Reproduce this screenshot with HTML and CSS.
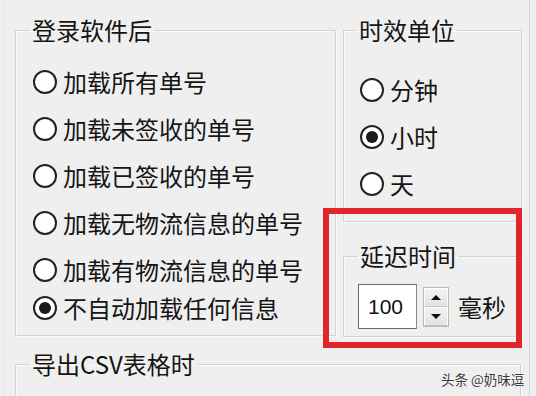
FILE: index.html
```html
<!DOCTYPE html>
<html lang="zh-CN">
<head>
    <meta charset="UTF-8">
    <title>设置</title>
    <link rel="stylesheet" href="styles.css">
</head>
<body>
    <div class="window">
        <div class="top">
            <fieldset class="group login">
                <legend>登录软件后</legend>
                <label class="radio"><span class="dot"></span>加载所有单号</label>
                <label class="radio"><span class="dot"></span>加载未签收的单号</label>
                <label class="radio"><span class="dot"></span>加载已签收的单号</label>
                <label class="radio"><span class="dot"></span>加载无物流信息的单号</label>
                <label class="radio"><span class="dot"></span>加载有物流信息的单号</label>
                <label class="radio checked tight"><span class="dot"></span>不自动加载任何信息</label>
            </fieldset>
            <div class="side">
                <fieldset class="group units">
                    <legend>时效单位</legend>
                    <label class="radio"><span class="dot"></span>分钟</label>
                    <label class="radio checked"><span class="dot"></span>小时</label>
                    <label class="radio"><span class="dot"></span>天</label>
                </fieldset>
                <fieldset class="group delay">
                    <legend>延迟时间</legend>
                    <div class="spin-row">
                        <div class="spin-input">100</div>
                        <div class="spin-btns">
                            <span class="spin-btn"><i class="arrow up"></i></span>
                            <span class="spin-btn"><i class="arrow down"></i></span>
                        </div>
                        <span class="unit">毫秒</span>
                    </div>
                </fieldset>
            </div>
        </div>
        <fieldset class="group export">
            <legend>导出CSV表格时</legend>
        </fieldset>

        <!-- annotation drawn over the dialog -->
        <div class="callout"></div>
        <div class="watermark">头条 @奶味逗</div>
    </div>
</body>
</html>
```

FILE: styles.css
```css
body {
    margin: 0;
    width: 536px;
    height: 396px;
    overflow: hidden;
    background: #efefef;
    font-family: "Noto Sans CJK SC", sans-serif;
    color: #151515;
}

.window {
    position: relative;
    box-sizing: border-box;
    width: 527px;
    height: 396px;
    margin-left: 3px;
    padding: 16px 0 0 11px;
    border-left: 1px solid #e3e3e3;
    border-right: 1px solid #d4d4d4;
}

.top { display: flex; gap: 7px; }

/* group boxes */
.group {
    box-sizing: border-box;
    margin: 0;
    padding: 0 0 0 15px;
    border: 1px solid #d3d3d3;
    box-shadow: inset 1px 1px 0 #fafafa, 1px 1px 0 #fafafa;
    display: flex;
    flex-direction: column;
    align-items: flex-start;
}
.group legend {
    font-size: 24px;
    line-height: 28px;
    padding: 0 2px;
    margin-left: -3px;
}

.login { width: 321px; height: 320px; padding-top: 25px; padding-left: 17px; }
.side { display: flex; flex-direction: column; }
.units { width: 179px; height: 206px; padding-top: 33px; padding-left: 16px; }
.delay { width: 179px; height: 95px; margin-top: 20px; padding-top: 14px; padding-left: 14px; }
.delay legend { margin-left: 0; }
.export { width: 506px; height: 47px; margin-top: 13px; padding-left: 17px; }

/* radio rows */
.radio {
    display: flex;
    align-items: center;
    gap: 6px;
    height: 26px;
    font-size: 24px;
    line-height: 26px;
    margin-bottom: 21px;
    white-space: nowrap;
}
.radio.tight { margin-top: -9px; }

.dot {
    box-sizing: border-box;
    width: 24px;
    height: 24px;
    border: 2px solid #222;
    border-radius: 50%;
    background: #fff;
    display: flex;
    align-items: center;
    justify-content: center;
}
.checked .dot::after {
    content: "";
    width: 12px;
    height: 12px;
    border-radius: 50%;
    background: #1a1a1a;
}

/* spin box */
.spin-row { display: flex; align-items: center; }
.spin-input {
    box-sizing: border-box;
    width: 59px;
    height: 45px;
    padding-left: 9px;
    border: 1px solid #6a6a6a;
    border-right-color: #8a8a8a;
    background: #fff;
    font-family: "Liberation Sans", Arial, sans-serif;
    font-size: 21px;
    line-height: 43px;
    color: #111;
}
.spin-btns {
    display: flex;
    flex-direction: column;
    margin-left: 6px;
    border: 1px solid #b9b9b9;
}
.spin-btn {
    box-sizing: border-box;
    width: 24px;
    height: 19px;
    background: linear-gradient(#f2f2f2, #e2e2e2);
    border: 1px solid #fdfdfd;
    border-bottom-color: #c4c4c4;
    display: flex;
    align-items: center;
    justify-content: center;
}
.arrow { width: 0; height: 0; border-left: 5px solid transparent; border-right: 5px solid transparent; }
.arrow.up { border-bottom: 5px solid #111; }
.arrow.down { border-top: 5px solid #111; }
.unit { margin-left: 9px; font-size: 24px; line-height: 28px; }

/* red highlight annotation */
.callout {
    position: absolute;
    left: 319px;
    top: 208px;
    box-sizing: border-box;
    width: 199px;
    height: 140px;
    border: 6px solid #e2252b;
}

.watermark {
    position: absolute;
    left: 437px;
    top: 370px;
    font-size: 13.5px;
    line-height: 18px;
    color: #3a3a3a;
    text-shadow: 0 0 2px #fff;
}
```
